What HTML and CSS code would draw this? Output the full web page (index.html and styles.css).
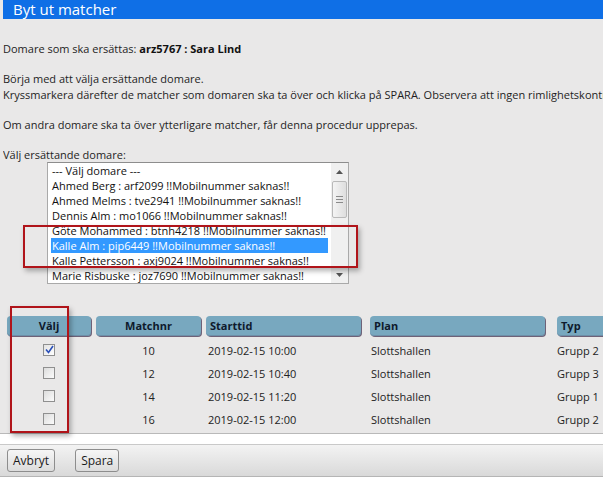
FILE: index.html
```html
<!DOCTYPE html>
<html lang="sv">
<head>
<meta charset="utf-8">
<title>Byt ut matcher</title>
<link rel="stylesheet" href="styles.css">
</head>
<body>
<div class="page">
  <header class="title-bar">Byt ut matcher</header>
  <section class="intro">
    <p class="line first">Domare som ska ersättas: <b>arz5767 : Sara Lind</b></p>
    <p class="line gap">Börja med att välja ersättande domare.<br>Kryssmarkera därefter de matcher som domaren ska ta över och klicka på SPARA. Observera att ingen rimlighetskontroll görs.</p>
    <p class="line gap">Om andra domare ska ta över ytterligare matcher, får denna procedur upprepas.</p>
    <p class="line gap label">Välj ersättande domare:</p>
    <div class="listbox">
      <ul class="options">
        <li>--- Välj domare ---</li>
        <li>Ahmed Berg : arf2099 !!Mobilnummer saknas!!</li>
        <li>Ahmed Melms : tve2941 !!Mobilnummer saknas!!</li>
        <li>Dennis Alm : mo1066 !!Mobilnummer saknas!!</li>
        <li>Göte Mohammed : btnh4218 !!Mobilnummer saknas!!</li>
        <li class="selected">Kalle Alm : pip6449 !!Mobilnummer saknas!!</li>
        <li>Kalle Pettersson : axj9024 !!Mobilnummer saknas!!</li>
        <li>Marie Risbuske : joz7690 !!Mobilnummer saknas!!</li>
      </ul>
      <div class="scrollbar">
        <div class="arrow up"><svg width="7" height="4" viewBox="0 0 7 4"><path d="M0 4 L3.5 0 L7 4 Z" fill="#555"/></svg></div>
        <div class="track">
          <div class="thumb"><span></span><span></span><span></span></div>
        </div>
        <div class="arrow down"><svg width="7" height="4" viewBox="0 0 7 4"><path d="M0 0 L3.5 4 L7 0 Z" fill="#555"/></svg></div>
      </div>
    </div>
  </section>

  <section class="matches">
    <div class="grid">
      <div class="th center">Välj</div>
      <div class="th center">Matchnr</div>
      <div class="th">Starttid</div>
      <div class="th">Plan</div>
      <div class="th">Typ</div>

      <div class="td center"><span class="cb checked"><svg width="9" height="9" viewBox="0 0 9 9"><path d="M1 4.5 L3.5 7.5 L8 1" fill="none" stroke="#2a4fb8" stroke-width="1.6"/></svg></span></div>
      <div class="td center">10</div>
      <div class="td">2019-02-15 10:00</div>
      <div class="td">Slottshallen</div>
      <div class="td">Grupp 2</div>

      <div class="td center"><span class="cb"></span></div>
      <div class="td center">12</div>
      <div class="td">2019-02-15 10:40</div>
      <div class="td">Slottshallen</div>
      <div class="td">Grupp 3</div>

      <div class="td center"><span class="cb"></span></div>
      <div class="td center">14</div>
      <div class="td">2019-02-15 11:20</div>
      <div class="td">Slottshallen</div>
      <div class="td">Grupp 1</div>

      <div class="td center"><span class="cb"></span></div>
      <div class="td center">16</div>
      <div class="td">2019-02-15 12:00</div>
      <div class="td">Slottshallen</div>
      <div class="td">Grupp 2</div>
    </div>
  </section>

  <div class="spacer"></div>
  <footer class="toolbar">
    <button class="btn">Avbryt</button>
    <button class="btn">Spara</button>
  </footer>

  <div class="mark mark-list"></div>
  <div class="mark mark-col"></div>
</div>
</body>
</html>
```

FILE: styles.css
```css
* { box-sizing: border-box; }
html, body { margin: 0; padding: 0; }
body {
  background: #ffffff;
  font-family: "Open Sans", "DejaVu Sans", sans-serif;
  font-size: 11px;
  color: #1e1e1e;
  width: 603px;
  height: 485px;
  overflow: hidden;
}
.page {
  position: relative;
  background: #e9e8e8;
  height: 434px;
}
.title-bar {
  margin-left: 3px;
  height: 19px;
  line-height: 18px;
  background: #0f6fe6;
  color: #ffffff;
  font-size: 15px;
  padding-left: 10px;
  white-space: nowrap;
}
.intro {
  padding-left: 3px;
}
.line {
  margin: 0;
  line-height: 16px;
  white-space: nowrap;
  overflow: hidden;
}
.line.first { padding-top: 22px; }
.line.gap { margin-top: 14px; }
.line.label { line-height: 15px; }
.line b { font-weight: 700; color: #111; }

.listbox {
  margin-left: 44px;
  width: 302px;
  height: 122px;
  border: 1px solid #a9a9a9;
  border-top-color: #8d8d8d;
  background: #ffffff;
  display: flex;
  padding: 0 0 0 3px;
}
.options {
  list-style: none;
  margin: 0;
  padding: 0;
  flex: 1;
}
.options li {
  height: 15px;
  line-height: 15px;
  padding-left: 1px;
  white-space: nowrap;
  color: #111;
}
.options li.selected {
  background: #3399ff;
  color: #ffffff;
}
.scrollbar {
  width: 17px;
  margin-left: 3px;
  background: #f0f0f0;
  display: flex;
  flex-direction: column;
}
.arrow {
  height: 17px;
  display: flex;
  align-items: center;
  justify-content: center;
}
.track {
  flex: 1;
  padding: 1px 1px;
}
.thumb {
  height: 37px;
  border: 1px solid #b9b9b9;
  border-radius: 2px;
  background: linear-gradient(to right, #f4f4f4, #dedede);
  display: flex;
  flex-direction: column;
  align-items: center;
  justify-content: center;
  gap: 2px;
}
.thumb span {
  width: 7px;
  height: 1px;
  background: #8a8a8a;
}

.matches {
  margin-top: 32px;
  padding-left: 7px;
}
.grid {
  display: grid;
  grid-template-columns: 89px 110px 164px 187px 80px;
  grid-auto-rows: 23px;
}
.grid .th {
  height: 20px;
  line-height: 20px;
  background: #78a8bf;
  border-radius: 4px;
  box-shadow: 1px 1px 0 #6e6278, inset 0 -1px 0 #6e8fa8;
  color: #0e1a2c;
  font-weight: 700;
  padding-left: 4px;
  white-space: nowrap;
}
.grid .th:nth-child(1) { width: 84px; }
.grid .th:nth-child(2) { width: 105px; }
.grid .th:nth-child(3) { width: 155px; }
.grid .th:nth-child(4) { width: 175px; }
.grid .th:nth-child(5) { width: 80px; }
.grid .th.center { text-align: center; padding-left: 0; }
.grid .td {
  line-height: 23px;
  padding-left: 4px;
  white-space: nowrap;
  color: #222;
}
.grid .td:nth-child(5n+1),
.grid .td:nth-child(5n+2) { text-align: center; padding-left: 0; }
.grid .td:nth-child(5n+1) { width: 84px; display: flex; align-items: center; justify-content: center; }
.grid .td:nth-child(5n+2) { width: 105px; }
.grid .td:nth-child(5n+3) { padding-left: 2px; }
.grid .td:nth-child(5n+4) { padding-left: 1px; }
.grid .td:nth-child(5n) { padding-left: 0; }

.cb {
  width: 12px;
  height: 12px;
  border: 1px solid #8f8f8f;
  background: linear-gradient(135deg, #dcdcdc, #fbfbfb);
  display: flex;
  align-items: center;
  justify-content: center;
  margin-top: -2px;
}
.cb.checked { background: linear-gradient(135deg, #e2e2e2, #ffffff); }

.spacer { display: none; }

.toolbar {
  position: relative;
  height: 44px;
  background: #ffffff;
  padding-top: 10px;
}
.matches { border-bottom: 1px solid #b9b9b9; padding-bottom: 2px; }

.toolbar {
  display: flex;
  align-items: center;
  gap: 20px;
  padding: 0 7px;
  height: 33px;
  margin-top: 10px;
  background: linear-gradient(to bottom, #f3f3f3, #d9d9d9);
  border-top: 1px solid #c9c9c9;
  border-bottom: 1px solid #b5b5b5;
}
.btn {
  font-family: "Open Sans", "DejaVu Sans", sans-serif;
  font-size: 12px;
  color: #1a1a1a;
  height: 23px;
  padding: 0 5px;
  border: 1px solid #8d8d8d;
  border-radius: 3px;
  background: linear-gradient(to bottom, #f6f6f6, #dcdcdc);
}

.mark {
  position: absolute;
  border: 2px solid #b0141a;
  box-shadow: 2px 3px 5px rgba(0,0,0,0.3);
  pointer-events: none;
}
.mark-list { left: 23px; top: 225px; width: 335px; height: 43px; }
.mark-col { left: 10px; top: 306px; width: 59px; height: 127px; }
```
